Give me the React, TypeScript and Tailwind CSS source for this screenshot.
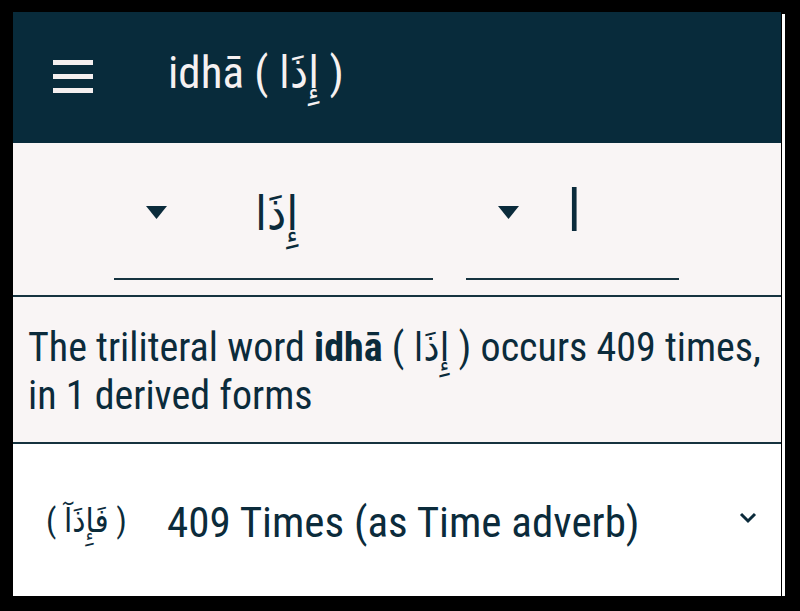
import React from 'react';

const sans = "font-['Roboto_Condensed','Liberation_Sans_Narrow',Roboto,'DejaVu_Sans',sans-serif] font-stretch-condensed";

function Caret() {
  return (
    <svg width="21" height="13" viewBox="0 0 21 13" className="shrink-0">
      <path d="M0 0 H21 L10.5 13 Z" fill="#0b2b3b" />
    </svg>
  );
}

export default function App() {
  return (
    <div className="w-[800px] h-[611px] bg-black pt-[12px] pl-[13px] flex">
      <div className={`w-[768px] h-[584px] flex flex-col ${sans}`}>
        {/* header */}
        <div className="h-[131px] bg-[#082b3b] flex items-center shrink-0">
          <div className="ml-[40px] w-[40px] flex flex-col gap-[9.5px] -mt-[2px]">
            <div className="h-[4.5px] bg-[#f4efef]" />
            <div className="h-[4.5px] bg-[#f4efef]" />
            <div className="h-[4.5px] bg-[#f4efef]" />
          </div>
          <div className="ml-[75px] text-[45px] leading-none text-[#f6f1f1] -mt-[10px]">
            idhā ( <bdi>إِذَا</bdi> )
          </div>
        </div>

        {/* dropdowns */}
        <div className="h-[154px] bg-[#f9f5f5] border-b-2 border-[#16333f] flex items-end pb-[15px] gap-[33px] shrink-0">
          <div className="ml-[101px] w-[319px] h-[110px] border-b-2 border-[#16333f] flex items-start">
            <div className="ml-[32px] mt-[36px]"><Caret /></div>
            <div className="ml-[88px] mt-[20px] text-[48px] leading-none text-[#0b2b3b]">إِذَا</div>
          </div>
          <div className="w-[213px] h-[110px] border-b-2 border-[#16333f] flex items-start">
            <div className="ml-[32px] mt-[36px]"><Caret /></div>
            <div className="ml-[48px] mt-[12px] text-[58px] leading-none text-[#0b2b3b]">ا</div>
          </div>
        </div>

        {/* summary */}
        <div className="h-[147px] bg-[#f9f5f5] border-b-2 border-[#16333f] pl-[15px] pr-[6px] pt-[27px] text-[40px] leading-[48px] text-[#0b2b3b] shrink-0">
          The triliteral word <span className="font-bold">idhā</span> ( <bdi>إِذَا</bdi> ) occurs 409 times, in 1 derived forms
        </div>

        {/* form row */}
        <div className="flex-1 bg-white flex items-center">
          <div className="ml-[33px] w-[94px] whitespace-nowrap text-[33px] text-[#0b2b3b] leading-none">( <bdi>فَإِذَآ</bdi> )</div>
          <div className="ml-[27px] mt-[4px] text-[43px] leading-none text-[#0b2b3b]">409 Times (as Time adverb)</div>
          <svg width="18" height="12" viewBox="0 0 18 12" className="ml-auto mr-[24px] -mt-[4px]">
            <path d="M2 2 L9 9 L16 2" stroke="#0b2b3b" strokeWidth="3" fill="none" />
          </svg>
        </div>
      </div>
      <div className="w-[1px]" />
      <div className="w-[3px] h-[582px] mt-[2px] bg-white" />
    </div>
  );
}
